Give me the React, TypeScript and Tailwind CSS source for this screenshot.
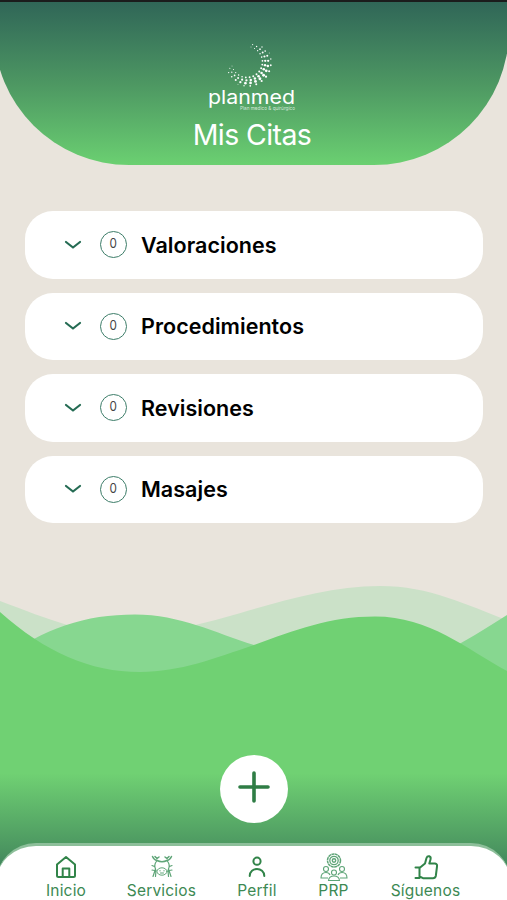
import React from 'react';

interface Category {
  name: string;
  count: number;
}

const categories: Category[] = [
  { name: 'Valoraciones', count: 0 },
  { name: 'Procedimientos', count: 0 },
  { name: 'Revisiones', count: 0 },
  { name: 'Masajes', count: 0 },
];

// Rings of the crescent in the logo, angles in degrees clockwise from the right
const rings = [
  { r: 15.5, from: -75, to: 165, dots: 18, size: 1 },
  { r: 18.3, from: -72, to: 160, dots: 18, size: 1.3 },
  { r: 21.2, from: -45, to: 150, dots: 15, size: 1.45 },
  { r: 24, from: -22, to: 112, dots: 10, size: 1.1 },
];

const Logo: React.FC = () => (
  <svg width="96" height="74" viewBox="0 0 96 74" fill="white" className="shrink-0">
    {rings.map((ring) =>
      Array.from({ length: ring.dots }, (_, i) => {
        const t = i / (ring.dots - 1);
        const a = ((ring.from + (ring.to - ring.from) * t) * Math.PI) / 180;
        return (
          <circle
            key={`${ring.r}-${i}`}
            cx={43 + ring.r * Math.cos(a)}
            cy={22 + ring.r * Math.sin(a)}
            r={ring.size * (0.45 + 0.55 * Math.sin(Math.PI * t))}
          />
        );
      })
    )}
    <text
      x="4"
      y="64"
      fontFamily="Inter, sans-serif"
      fontSize="19"
      fontWeight="400"
      textLength="87"
      lengthAdjust="spacingAndGlyphs"
    >
      planmed
    </text>
    <text
      x="36"
      y="70"
      fillOpacity="0.75"
      fontFamily="Inter, sans-serif"
      fontSize="5"
      textLength="55"
      lengthAdjust="spacingAndGlyphs"
    >
      Plan medico &amp; quirúrgico
    </text>
  </svg>
);

const Header: React.FC = () => (
  <header className="-ml-[6px] flex h-[163px] w-[515px] shrink-0 flex-col items-center rounded-b-[135px] bg-gradient-to-b from-[#306657] via-[#4d9762] to-[#6bd071] pt-[38px] pl-[1px]">
    <Logo />
    <h1 className="mt-[4px] text-[28.5px] leading-[34px] tracking-[-0.6px] text-white">Mis Citas</h1>
  </header>
);

const CategoryRow: React.FC<Category> = ({ name, count }) => (
  <button className="flex h-[67.5px] w-full items-center rounded-[28px] bg-white pl-[39px]">
    <svg width="18" height="12" viewBox="0 0 18 12" fill="none" stroke="#246b53" strokeWidth="2.2" strokeLinecap="round" strokeLinejoin="round">
      <path d="M2 3L9 8.500L16 3" />
    </svg>
    <span className="ml-[18px] flex size-[27px] items-center justify-center rounded-full border-[1.5px] border-[#3d7d69] pb-[2px] text-[13px] text-[#444]">
      <span className="scale-x-90">{count}</span>
    </span>
    <span className="ml-[14px] text-[21.5px] font-semibold tracking-[0.04px] text-black">{name}</span>
  </button>
);

const Waves: React.FC = () => (
  <svg width="507" height="320" viewBox="0 0 507 320" className="absolute inset-x-0 bottom-0">
    <defs>
      <linearGradient id="wave" x1="0" y1="0" x2="0" y2="1">
        <stop offset="0" stopColor="#70d173" />
        <stop offset="0.56" stopColor="#70d173" />
        <stop offset="0.83" stopColor="#4a9460" />
        <stop offset="1" stopColor="#2f6657" />
      </linearGradient>
    </defs>
    <path d="M0 21C50 40 85 54 127 54C210 54 290 6 380 6C430 6 466 25 507 40V320H0Z" fill="#cbe1c8" />
    <path d="M0 80C45 48 85 34.500 135 34.500C180 34.500 215 53 254 65C295 77 330 92 370 92C420 92 465 61 507 35V200H0Z" fill="#87d790" />
    <path d="M0 32C45 72 90 92 140 92C180 92 215 78 254 65C295 50 330 36.500 375 36.500C430 36.500 466 69 507 91V320H0Z" fill="url(#wave)" />
  </svg>
);

const HomeIcon: React.FC = () => (
  <svg width="24" height="26" viewBox="0 0 24 26" fill="none" stroke="#318449" strokeWidth="2" strokeLinecap="round" strokeLinejoin="round">
    <path d="M3 10.500L12 3L21 10.500V21.500Q21 23 19.500 23H4.500Q3 23 3 21.500ZM8.700 22.500V14.500H15.300V22.500" />
  </svg>
);

const ServicesIcon: React.FC = () => (
  <svg width="24" height="26" viewBox="0 0 24 26" fill="none" stroke="#5fa578" strokeWidth="1" strokeLinecap="round">
    <path d="M2.500 2.500Q4 6 7 6.500M21.500 2.500Q20 6 17 6.500M5 2.500L7 4.500L9 3M19 2.500L17 4.500L15 3M7 6.500Q12 9 17 6.500" strokeWidth="1.500" />
    <path d="M7 6.500Q3.500 11 5.500 15L3 22.500M17 6.500Q20.500 11 18.500 15L21 22.500M2 11.500L4.500 12.500M22 11.500L19.500 12.500M2 16L4.500 16.500M22 16L19.500 16.500M6 16L5.500 22.500M18 16L18.500 22.500" strokeWidth="1.200" />
    <ellipse cx="12" cy="17.500" rx="5" ry="3.700" />
    <path d="M10 16.500V17M14 16.500V17M10.500 19H13.500" />
  </svg>
);

const ProfileIcon: React.FC = () => (
  <svg width="24" height="26" viewBox="0 0 24 26" fill="none" stroke="#318449" strokeWidth="2" strokeLinecap="round">
    <circle cx="12" cy="7.200" r="3.600" />
    <path d="M4.700 22C4.700 12.500 19.300 12.500 19.300 22" />
  </svg>
);

const PrpIcon: React.FC = () => (
  <svg width="28" height="30" viewBox="0 0 28 30" fill="none" stroke="#5fa578" strokeWidth="1.100">
    <circle cx="14" cy="8.500" r="6.500" strokeDasharray="3 0.400" strokeWidth="1.500" />
    <circle cx="14" cy="8.500" r="4.200" strokeWidth="1.300" />
    <circle cx="14" cy="8.500" r="1.700" strokeWidth="1.400" />
    <circle cx="6" cy="17" r="2.500" />
    <circle cx="22" cy="17" r="2.500" />
    <circle cx="14" cy="20.500" r="2.500" />
    <path d="M8 26H1Q1 20.500 6 20.500Q9 20.500 10 23M20 26H27Q27 20.500 22 20.500Q19 20.500 18 23M8.500 28.500Q9 24 14 24Q19 24 19.500 28.500Z" />
  </svg>
);

const LikeIcon: React.FC = () => (
  <svg width="26" height="26" viewBox="0 0 26 26" fill="none" stroke="#318449" strokeWidth="2" strokeLinecap="round" strokeLinejoin="round">
    <path d="M2.500 13.500H6.500V24H2.500M6.500 14L12 9.500L13.500 4Q14.300 1.800 16.300 2.300Q18.200 3 17.500 5.500L16.300 9.500H22Q24.500 10 24 12.500L22.800 22Q22.300 24.200 20 24.200H10L6.500 22.500" />
  </svg>
);

const tabs = [
  { label: 'Inicio', icon: <HomeIcon />, width: 'w-[100px]' },
  { label: 'Servicios', icon: <ServicesIcon />, width: 'w-[91px]' },
  { label: 'Perfil', icon: <ProfileIcon />, width: 'w-[100px]' },
  { label: 'PRP', icon: <PrpIcon />, width: 'w-[53px]' },
  { label: 'Síguenos', icon: <LikeIcon />, width: 'w-[131px]' },
];

const TabBar: React.FC = () => (
  <nav className="relative -mx-[4px] flex h-[57px] shrink-0 justify-center rounded-t-[40px] border-t-[3px] border-[#8dbf9a] bg-white pt-[6px]">
    {tabs.map((tab) => (
      <button key={tab.label} className={`flex flex-col items-center text-[#3d8953] ${tab.width}`}>
        <span className="flex h-[30px] items-center justify-center">{tab.icon}</span>
        <span className="text-[15.5px] leading-[18px] tracking-[0.200px]">{tab.label}</span>
      </button>
    ))}
  </nav>
);

const App: React.FC = () => {
  return (
    <div className="relative flex h-[900px] w-[507px] flex-col overflow-hidden border-t-2 border-[#1b1c1c] bg-[#e9e4dc] font-['Inter',sans-serif]">
      <Waves />
      <Header />
      <main className="relative mt-[46px] flex flex-1 flex-col gap-[14px] pr-[24px] pl-[25px]">
        {categories.map((category) => (
          <CategoryRow key={category.name} {...category} />
        ))}
      </main>
      <div className="relative mb-[20px] flex justify-center">
        <button className="flex size-[68px] items-center justify-center rounded-full bg-white pb-[4px]">
          <svg width="34" height="34" viewBox="0 0 34 34" stroke="#2f7d45" strokeWidth="3.600" strokeLinecap="round">
            <path d="M17 3V31M3 17H31" />
          </svg>
        </button>
      </div>
      <TabBar />
    </div>
  );
};

export default App;
